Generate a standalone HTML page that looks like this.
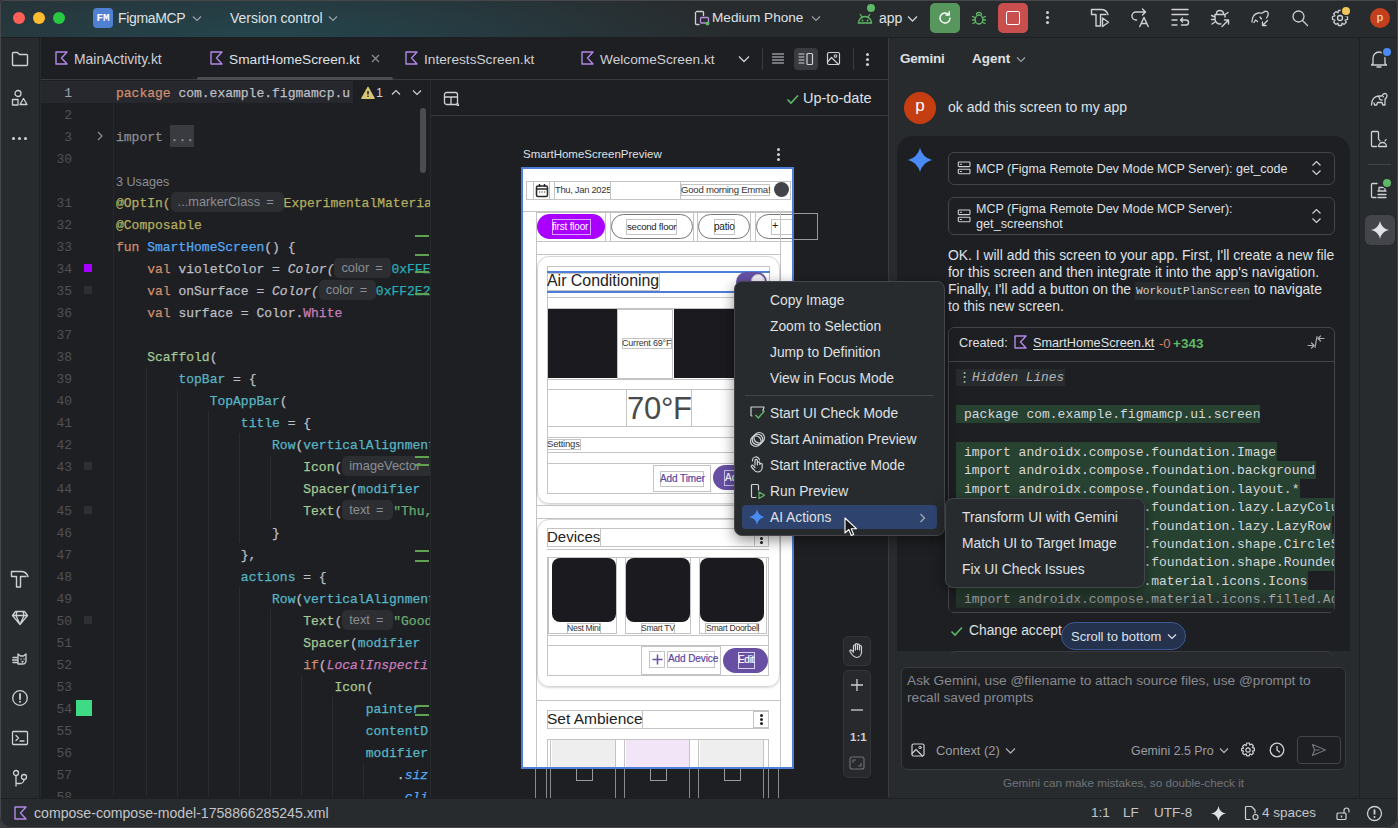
<!DOCTYPE html>
<html><head><meta charset="utf-8">
<style>
*{box-sizing:border-box;margin:0;padding:0}
html,body{width:1398px;height:828px;overflow:hidden;background:#3c3e42}
body{font-family:"Liberation Sans",sans-serif;color:#dfe1e5;font-size:13px;position:relative}
.a{position:absolute}
.win{position:absolute;left:0;top:0;width:1398px;height:828px;border-radius:4px 4px 10px 10px;overflow:hidden;background:#282b2d}
.mono{font-family:"Liberation Mono",monospace}
svg{position:absolute;overflow:visible}
.t{position:absolute;white-space:pre;line-height:1}
.ic{fill:none;stroke:#ced0d6;stroke-width:1.3;stroke-linecap:round;stroke-linejoin:round}
/* editor */
.ln{position:absolute;left:40px;width:32px;height:22px;text-align:right;font:13px "Liberation Mono",monospace;line-height:26px;color:#4e5157}
.ln.cur{color:#a1a3ab}
.cl{position:absolute;left:116px;height:22px;white-space:pre;font:13px "Liberation Mono",monospace;line-height:26px;color:#bcbec4;-webkit-text-stroke:.25px}
.kw{color:#cf8e6d}.an{color:#b3ae60}.fn{color:#56a8f5}.it{font-style:italic}.num{color:#2aacb8}.pu{color:#c77dbb}
.cm{color:#a4c896}.na{color:#58b5c5}.str{color:#6aab73}.pit{color:#c77dbb;font-style:italic}.bit{color:#56a8f5;font-style:italic}
.im{color:#8a8d93}.fold{color:#8a8d93}
.usage{font-family:"Liberation Sans",sans-serif;font-size:12.6px;color:#8c8e94;-webkit-text-stroke:0}
.hint{display:inline-block;height:20px;vertical-align:top;margin-top:1px;background:#2c2e32;border-radius:5px;font:12.8px "Liberation Sans",sans-serif;line-height:20px;color:#8b8e94;white-space:pre;overflow:hidden;word-spacing:2.5px;-webkit-text-stroke:0}
.hint span{padding-left:7px}
.guide{position:absolute;width:1px;background:#2a2c30}
/* menu */
.mi{position:absolute;left:770px;font-size:13.8px;color:#dfe1e5;white-space:pre;line-height:1}
.smi{position:absolute;left:962px;font-size:13.8px;color:#dfe1e5;white-space:pre;line-height:1}
</style></head><body>
<div class="win">
<!-- TITLE BAR -->
<div class="a" style="left:0;top:0;width:1398px;height:38px;background:radial-gradient(ellipse 480px 80px at 260px 38px,#24454d 0%,#263b41 45%,#282b2d 100%)"></div>
<div class="a" style="left:0;top:37px;width:1398px;height:1px;background:#1e1f22"></div>
<div class="a" style="left:13px;top:12px;width:12px;height:12px;border-radius:50%;background:#fe5f57"></div>
<div class="a" style="left:33px;top:12px;width:12px;height:12px;border-radius:50%;background:#febc2e"></div>
<div class="a" style="left:53px;top:12px;width:12px;height:12px;border-radius:50%;background:#28c840"></div>
<div class="a" style="left:93px;top:8px;width:20px;height:20px;border-radius:4px;background:#4f80d1;color:#fff;font:bold 11px 'Liberation Mono',monospace;line-height:20px;text-align:center">FM</div>
<div class="t" style="left:118px;top:11px;font-size:14px;letter-spacing:-.35px;color:#dfe1e5">FigmaMCP</div>
<svg style="left:192px;top:15px" width="10" height="8"><path d="M1 1.5l4 4 4-4" fill="none" stroke="#9da0a8" stroke-width="1.2"/></svg>
<div class="t" style="left:230px;top:11px;font-size:14px;color:#dfe1e5">Version control</div>
<svg style="left:328px;top:15px" width="10" height="8"><path d="M1 1.5l4 4 4-4" fill="none" stroke="#9da0a8" stroke-width="1.2"/></svg>
<!-- device -->
<svg style="left:694px;top:10px" width="16" height="16"><path class="ic" d="M2.5 1.5h6a1 1 0 0 1 1 1v3M5 14.5H2.5a1 1 0 0 1-1-1v-11" stroke="#ced0d6"/><rect x="6.5" y="7.5" width="8" height="5.5" rx="1" class="ic" style="stroke:#b98ee0"/><circle cx="13.5" cy="13.5" r="2" fill="#5fb865"/></svg>
<div class="t" style="left:712px;top:11px;font-size:13.6px;color:#dfe1e5">Medium Phone</div>
<svg style="left:811px;top:15px" width="10" height="8"><path d="M1 1.5l4 4 4-4" fill="none" stroke="#9da0a8" stroke-width="1.2"/></svg>
<!-- android -->
<svg style="left:857px;top:11px" width="16" height="14"><path d="M1.5 12a6.5 6.5 0 0 1 13 0z" fill="none" stroke="#5fb865" stroke-width="1.4"/><path d="M3 3l2 3M13 3l-2 3" stroke="#5fb865" stroke-width="1.3"/><circle cx="5.5" cy="9.5" r=".9" fill="#5fb865"/><circle cx="10.5" cy="9.5" r=".9" fill="#5fb865"/></svg>
<div class="a" style="left:867px;top:4px;width:8px;height:8px;border-radius:50%;background:#5fb865;box-shadow:0 0 0 1.5px #282b2d"></div>
<div class="t" style="left:879px;top:11px;font-size:14px;color:#dfe1e5">app</div>
<svg style="left:907px;top:15px" width="11" height="8"><path d="M1 1.5l4.5 4.5 4.5-4.5" fill="none" stroke="#ced0d6" stroke-width="1.3"/></svg>
<!-- run buttons -->
<div class="a" style="left:930px;top:3px;width:30px;height:30px;border-radius:5px;background:#57965c"></div>
<svg style="left:937px;top:10px" width="16" height="16"><path d="M13 8a5 5 0 1 1-1.6-3.7" fill="none" stroke="#fff" stroke-width="1.4" stroke-linecap="round"/><path d="M12.2 1.8v3.2H9" fill="none" stroke="#fff" stroke-width="1.4" stroke-linecap="round" stroke-linejoin="round"/></svg>
<svg style="left:971px;top:10px" width="16" height="16"><ellipse cx="8" cy="9.5" rx="3.8" ry="4.5" fill="none" stroke="#5fb865" stroke-width="1.3"/><path d="M5.5 4.5a2.5 2 0 0 1 5 0M1.5 6.5l2.5 1.2M14.5 6.5L12 7.7M1.5 10h2.7M14.5 10h-2.7M2 13.5l2.3-1.2M14 13.5l-2.3-1.2" fill="none" stroke="#5fb865" stroke-width="1.3" stroke-linecap="round"/></svg>
<div class="a" style="left:998px;top:3px;width:30px;height:30px;border-radius:5px;background:#c94f4f"></div>
<div class="a" style="left:1006px;top:11px;width:14px;height:14px;border-radius:2px;border:1.6px solid #fff"></div>
<div class="a" style="left:1046px;top:11px;width:3px;height:3px;border-radius:50%;background:#ced0d6;box-shadow:0 5px 0 #ced0d6,0 10px 0 #ced0d6"></div>
<!-- right title icons -->
<svg style="left:1089px;top:6px" width="22" height="24"><path class="ic" d="M2.5 3.5H12c3.5 0 6 2 7 5M2.5 3.5v5H7M11.5 8.5H17M7 8.5v11.5h4.5V8.5" style="stroke-width:1.4"/><path class="ic" d="M13.5 12v8.5l6-4.25z" style="stroke-width:1.4"/></svg>
<svg style="left:1129px;top:6px" width="22" height="24"><path class="ic" d="M7.5 14H7a4 4 0 0 1 0-8h9M13.5 3l3 3-3 3M10.8 20.5l4.2-9 4.2 9M12.2 17.5h5.6" style="stroke-width:1.4"/></svg>
<svg style="left:1169px;top:6px" width="22" height="24"><path class="ic" d="M3 3.5h16M3 8.5h16M3 14h5M3 19h5M13.5 12l-2 2 2 2M11.5 14h5.5a2.5 2.5 0 0 1 0 5h-4.5" style="stroke-width:1.4"/></svg>
<svg style="left:1209px;top:6px" width="22" height="24"><path class="ic" d="M7.5 7.5a3.5 3 0 0 1 7 0M6 8.5h10v2.5M6 8.5v4.5a5 5 0 0 0 6 4.9M2.5 9.5l3.5 1.5M2.5 13.5h3.5M3 18l3-2M19 6.5l-3 2M13 20.5l6.5-6.5M15.5 14h4v4" style="stroke-width:1.4"/></svg>
<svg style="left:1250px;top:8px" width="20" height="20"><path class="ic" d="M2 14c0-4 2-8 6-9 2-.5 3.5.5 4.5 0 1.3-.8 2.5-2.5 4.5-1.5 1.5 1 1.2 3.5.5 5l-1 1.5M4 14.5l1.5-2.5 2 1.5M10 9l1.5 2M17.5 12.5l-5 5M12.5 17.5h3.5M12.5 17.5v-3.5"/></svg>
<svg style="left:1291px;top:9px" width="18" height="18"><circle cx="7.5" cy="7.5" r="5.5" class="ic"/><path class="ic" d="M11.5 11.5l5 5"/></svg>
<svg style="left:1331px;top:9px" width="18" height="18"><path class="ic" d="M7.5 1.5h3l.6 2.3 2-1.2 2.2 2.1-1.2 2.1 2.4.7v3l-2.4.7 1.2 2.1-2.2 2.1-2-1.2-.6 2.3h-3l-.6-2.3-2 1.2-2.2-2.1 1.2-2.1-2.4-.7v-3l2.4-.7-1.2-2.1 2.2-2.1 2 1.2z"/><circle cx="9" cy="9" r="2.5" class="ic"/></svg>
<div class="a" style="left:1342px;top:7px;width:8px;height:8px;border-radius:50%;background:#f2c55c;box-shadow:0 0 0 1.5px #282b2d"></div>
<div class="a" style="left:1370px;top:8px;width:20px;height:20px;border-radius:50%;background:#c4401c;color:#f0e6e6;font:11.5px 'Liberation Sans',sans-serif;line-height:19px;text-align:center">p</div>
<!-- LEFT STRIP -->
<div class="a" style="left:0;top:38px;width:40px;height:760px;background:#282b2d;border-right:1px solid #1e1f22"></div>
<svg style="left:11px;top:50px" width="18" height="18"><path class="ic" d="M1.5 3.5a1 1 0 0 1 1-1h4l2 2h7a1 1 0 0 1 1 1v9a1 1 0 0 1-1 1h-13a1 1 0 0 1-1-1z" style="stroke-width:1.4"/><path class="ic" d="M1.5 7h15" style="stroke-width:1.2;opacity:0"/></svg>
<svg style="left:11px;top:89px" width="18" height="18"><circle cx="7" cy="4.5" r="3" class="ic"/><rect x="1.5" y="10.5" width="5.5" height="5.5" class="ic"/><path class="ic" d="M12.5 9.5l3.5 6h-7z"/></svg>
<div class="a" style="left:12px;top:137px;width:3px;height:3px;border-radius:50%;background:#ced0d6;box-shadow:6px 0 0 #ced0d6,12px 0 0 #ced0d6"></div>
<svg style="left:10px;top:569px" width="20" height="20"><path class="ic" d="M1.5 2.5H11c3.5 0 6 2 7 5M1.5 2.5v5h5M10.5 7.5H16M6.5 7.5v10.5h4V7.5" style="stroke-width:1.4"/></svg>
<svg style="left:11px;top:609px" width="18" height="18"><path class="ic" d="M4.5 2.5h9l3 4-7.5 9-7.5-9zM1.5 6.5h15M6 2.5l-1 4 4 9 4-9-1-4"/></svg>
<svg style="left:11px;top:649px" width="18" height="18"><path class="ic" d="M7 5l2.5 2h3L15 5v6.5c0 2-1.5 3.5-3.5 3.5H7zM2 8.5h4M1.5 11h4.5M2 13.5h4M10 10h.1M13 10h.1M11 12.5l.5.5.5-.5"/></svg>
<svg style="left:11px;top:689px" width="18" height="18"><circle cx="9" cy="9" r="7.3" class="ic"/><path class="ic" d="M9 5v5" style="stroke-width:1.8"/><circle cx="9" cy="12.8" r="1" fill="#ced0d6"/></svg>
<svg style="left:11px;top:729px" width="18" height="18"><rect x="1.5" y="2.5" width="15" height="13" rx="1" class="ic"/><path class="ic" d="M5 6.5l2.5 2.5L5 11.5M9 12h4"/></svg>
<svg style="left:11px;top:769px" width="18" height="18"><circle cx="5" cy="4" r="2.5" class="ic"/><circle cx="13" cy="8" r="2.5" class="ic"/><path class="ic" d="M5 6.5V17M13 10.5a4 4 0 0 1-4 4H5"/></svg>
<!-- EDITOR AREA BG -->
<div class="a" style="left:41px;top:38px;width:847px;height:760px;background:#1e1f22"></div>
<!-- tabs -->
<div class="a" style="left:41px;top:79px;width:847px;height:1px;background:#393b40"></div>
<svg style="left:55px;top:51px" width="14" height="14"><path d="M1 1h11L6.5 7 12 13H1z" fill="none" stroke="#b188e8" stroke-width="1.4" stroke-linejoin="round"/></svg>
<div class="t" style="left:74px;top:53px;font-size:13.9px;color:#ced0d6">MainActivity.kt</div>
<svg style="left:210px;top:51px" width="14" height="14"><path d="M1 1h11L6.5 7 12 13H1z" fill="none" stroke="#b188e8" stroke-width="1.4" stroke-linejoin="round"/></svg>
<div class="t" style="left:229px;top:53px;font-size:13.7px;color:#dfe1e5">SmartHomeScreen.kt</div>
<svg style="left:371px;top:54px" width="9" height="9"><path d="M1 1l7 7M8 1L1 8" stroke="#8c8f94" stroke-width="1.2"/></svg>
<div class="a" style="left:197px;top:77px;width:196px;height:3px;border-radius:2px;background:#4b4d52"></div>
<svg style="left:405px;top:51px" width="14" height="14"><path d="M1 1h11L6.5 7 12 13H1z" fill="none" stroke="#b188e8" stroke-width="1.4" stroke-linejoin="round"/></svg>
<div class="t" style="left:424px;top:53px;font-size:13.7px;color:#ced0d6">InterestsScreen.kt</div>
<svg style="left:581px;top:51px" width="14" height="14"><path d="M1 1h11L6.5 7 12 13H1z" fill="none" stroke="#b188e8" stroke-width="1.4" stroke-linejoin="round"/></svg>
<div class="t" style="left:600px;top:53px;font-size:13.7px;color:#ced0d6">WelcomeScreen.kt</div>
<svg style="left:738px;top:55px" width="12" height="8"><path d="M1 1.5l5 5 5-5" fill="none" stroke="#ced0d6" stroke-width="1.3"/></svg>
<div class="a" style="left:762px;top:48px;width:1px;height:22px;background:#393b40"></div>
<svg style="left:771px;top:52px" width="14" height="14"><path class="ic" d="M1.5 2h11M1.5 5h11M1.5 8h11M1.5 11h11" style="stroke-width:1.2"/></svg>
<div class="a" style="left:794px;top:48px;width:24px;height:22px;border-radius:4px;background:#393b40"></div>
<svg style="left:798px;top:52px" width="16" height="14"><path class="ic" d="M1 2h5M1 5h5M1 8h5M1 11h5" style="stroke-width:1.2"/><rect x="9" y="1.5" width="5.5" height="11" rx="1" class="ic" style="stroke-width:1.2"/></svg>
<svg style="left:826px;top:51px" width="15" height="15"><rect x="1.5" y="1.5" width="12" height="12" rx="1.5" class="ic" style="stroke-width:1.2"/><circle cx="9.5" cy="5" r="1.3" class="ic" style="stroke-width:1.1"/><path class="ic" d="M1.5 11l4-4.5 7 7" style="stroke-width:1.2"/></svg>
<div class="a" style="left:853px;top:48px;width:1px;height:22px;background:#393b40"></div>
<div class="a" style="left:866px;top:53px;width:3px;height:3px;border-radius:50%;background:#ced0d6;box-shadow:0 5px 0 #ced0d6,0 10px 0 #ced0d6"></div>
<!-- current line -->
<div class="a" style="left:41px;top:81px;width:389px;height:22px;background:#26282e"></div>
<!-- gutter sep -->
<div class="a" style="left:113px;top:81px;width:1px;height:716px;background:#26282c"></div>
<div class="a" style="left:170px;top:125px;width:24px;height:22px;background:#393b40"></div>
<div class="ln cur" style="top:81px">1</div>
<div class="cl" style="top:81px"><span class="kw">package</span><span class="d"> com.example.figmamcp.u</span></div>
<div class="ln" style="top:103px">2</div>
<div class="ln" style="top:125px">3</div>
<div class="cl" style="top:125px"><span class="im">import </span><span class="fold">...</span></div>
<div class="ln" style="top:147px">30</div>
<div class="cl" style="top:169px"><span class="usage">3 Usages</span></div>
<div class="ln" style="top:191px">31</div>
<div class="cl" style="top:191px"><span class="an">@OptIn(</span><span class="hint" style="width:113px"><span>...markerClass =</span></span><span class="an">ExperimentalMateria</span></div>
<div class="ln" style="top:213px">32</div>
<div class="cl" style="top:213px"><span class="an">@Composable</span></div>
<div class="ln" style="top:235px">33</div>
<div class="cl" style="top:235px"><span class="kw">fun </span><span class="fn">SmartHomeScreen</span><span class="d">() {</span></div>
<div class="ln" style="top:257px">34</div>
<div class="cl" style="top:257px"><span class="d">    </span><span class="kw">val</span><span class="d"> violetColor = </span><span class="it">Color(</span><span class="hint" style="width:57px"><span>color =</span></span><span class="num">0xFFEB</span></div>
<div class="ln" style="top:279px">35</div>
<div class="cl" style="top:279px"><span class="d">    </span><span class="kw">val</span><span class="d"> onSurface = </span><span class="it">Color(</span><span class="hint" style="width:57px"><span>color =</span></span><span class="num">0xFF2E2</span></div>
<div class="ln" style="top:301px">36</div>
<div class="cl" style="top:301px"><span class="d">    </span><span class="kw">val</span><span class="d"> surface = Color.</span><span class="pu">White</span></div>
<div class="ln" style="top:323px">37</div>
<div class="ln" style="top:345px">38</div>
<div class="cl" style="top:345px"><span class="d">    </span><span class="cm">Scaffold</span><span class="d">(</span></div>
<div class="ln" style="top:367px">39</div>
<div class="cl" style="top:367px"><span class="d">        </span><span class="na">topBar</span><span class="d"> = {</span></div>
<div class="ln" style="top:389px">40</div>
<div class="cl" style="top:389px"><span class="d">            </span><span class="na">TopAppBar</span><span class="d">(</span></div>
<div class="ln" style="top:411px">41</div>
<div class="cl" style="top:411px"><span class="d">                </span><span class="na">title</span><span class="d"> = {</span></div>
<div class="ln" style="top:433px">42</div>
<div class="cl" style="top:433px"><span class="d">                    </span><span class="na">Row</span><span class="d">(</span><span class="na">verticalAlignment</span></div>
<div class="ln" style="top:455px">43</div>
<div class="cl" style="top:455px"><span class="d">                        </span><span class="cm">Icon</span><span class="d">(</span><span class="hint" style="width:90px"><span>imageVector</span></span></div>
<div class="ln" style="top:477px">44</div>
<div class="cl" style="top:477px"><span class="d">                        </span><span class="cm">Spacer</span><span class="d">(</span><span class="na">modifier</span></div>
<div class="ln" style="top:499px">45</div>
<div class="cl" style="top:499px"><span class="d">                        </span><span class="cm">Text</span><span class="d">(</span><span class="hint" style="width:51px"><span>text =</span></span><span class="str">"Thu,</span></div>
<div class="ln" style="top:521px">46</div>
<div class="cl" style="top:521px"><span class="d">                    }</span></div>
<div class="ln" style="top:543px">47</div>
<div class="cl" style="top:543px"><span class="d">                },</span></div>
<div class="ln" style="top:565px">48</div>
<div class="cl" style="top:565px"><span class="d">                </span><span class="na">actions</span><span class="d"> = {</span></div>
<div class="ln" style="top:587px">49</div>
<div class="cl" style="top:587px"><span class="d">                    </span><span class="na">Row</span><span class="d">(</span><span class="na">verticalAlignment</span></div>
<div class="ln" style="top:609px">50</div>
<div class="cl" style="top:609px"><span class="d">                        </span><span class="cm">Text</span><span class="d">(</span><span class="hint" style="width:51px"><span>text =</span></span><span class="str">"Good</span></div>
<div class="ln" style="top:631px">51</div>
<div class="cl" style="top:631px"><span class="d">                        </span><span class="cm">Spacer</span><span class="d">(</span><span class="na">modifier</span></div>
<div class="ln" style="top:653px">52</div>
<div class="cl" style="top:653px"><span class="d">                        </span><span class="kw">if</span><span class="d">(</span><span class="pit">LocalInspecti</span></div>
<div class="ln" style="top:675px">53</div>
<div class="cl" style="top:675px"><span class="d">                            </span><span class="cm">Icon</span><span class="d">(</span></div>
<div class="ln" style="top:697px">54</div>
<div class="cl" style="top:697px"><span class="d">                                </span><span class="na">painter</span></div>
<div class="ln" style="top:719px">55</div>
<div class="cl" style="top:719px"><span class="d">                                </span><span class="na">contentD</span></div>
<div class="ln" style="top:741px">56</div>
<div class="cl" style="top:741px"><span class="d">                                </span><span class="na">modifier</span></div>
<div class="ln" style="top:763px">57</div>
<div class="cl" style="top:763px"><span class="d">                                    .</span><span class="bit">siz</span></div>
<div class="ln" style="top:785px">58</div>
<div class="cl" style="top:785px"><span class="d">                                     </span><span class="bit">cli</span></div><!-- guides -->
<div class="guide" style="left:146px;top:367px;height:430px"></div>
<div class="guide" style="left:177px;top:389px;height:408px"></div>
<div class="guide" style="left:208px;top:411px;height:386px"></div>
<div class="guide" style="left:239px;top:433px;height:110px"></div>
<div class="guide" style="left:270px;top:455px;height:66px"></div>
<div class="guide" style="left:239px;top:587px;height:210px"></div>
<div class="guide" style="left:270px;top:609px;height:188px"></div>
<div class="guide" style="left:301px;top:675px;height:122px"></div>
<div class="guide" style="left:332px;top:697px;height:100px"></div>
<div class="guide" style="left:363px;top:763px;height:34px"></div>
<!-- gutter icons -->
<svg style="left:96px;top:131px" width="8" height="10"><path d="M2 1l4 4-4 4" fill="none" stroke="#8c8f94" stroke-width="1.2"/></svg>
<div class="a" style="left:84px;top:264px;width:8px;height:8px;background:#a600ff"></div>
<div class="a" style="left:84px;top:286px;width:8px;height:8px;background:#2e2e32"></div>
<div class="a" style="left:84px;top:462px;width:8px;height:8px;background:#2e3032"></div>
<div class="a" style="left:84px;top:506px;width:8px;height:8px;background:#2e3032"></div>
<div class="a" style="left:84px;top:616px;width:8px;height:8px;background:#2e3032"></div>
<div class="a" style="left:76px;top:700px;width:16px;height:16px;background:#3ddc84"></div>
<!-- editor right overlay: clip code -->
<div class="a" style="left:430px;top:80px;width:458px;height:718px;background:#1e1f22"></div>
<div class="a" style="left:430px;top:80px;width:1px;height:717px;background:#282b2d"></div>
<!-- warning box -->
<div class="a" style="left:353px;top:81px;width:77px;height:22px;background:#1e1f22"></div>
<svg style="left:361px;top:86px" width="14" height="13"><path d="M7 1.2L13.2 12.3H.8z" fill="#d8c573" stroke="#d8c573" stroke-width="1.2" stroke-linejoin="round"/><path d="M7 5v3.5" stroke="#1e1f22" stroke-width="1.5"/><circle cx="7" cy="10.3" r=".8" fill="#1e1f22"/></svg>
<div class="t" style="left:376px;top:87px;font-size:12.5px;color:#ced0d6">1</div>
<svg style="left:391px;top:89px" width="10" height="7"><path d="M1 5.5l4-4 4 4" fill="none" stroke="#ced0d6" stroke-width="1.2"/></svg>
<svg style="left:412px;top:89px" width="10" height="7"><path d="M1 1.5l4 4 4-4" fill="none" stroke="#ced0d6" stroke-width="1.2"/></svg>
<!-- scrollbar -->
<div class="a" style="left:420px;top:108px;width:6px;height:65px;border-radius:3px;background:#4a4c50"></div>
<!-- green markers -->
<div class="a" style="left:415px;top:235px;width:14px;height:2px;background:#5fa34f"></div>
<div class="a" style="left:415px;top:254px;width:14px;height:2px;background:#5fa34f"></div>
<div class="a" style="left:415px;top:271px;width:14px;height:2px;background:#5fa34f"></div>
<div class="a" style="left:415px;top:293px;width:14px;height:2px;background:#5fa34f"></div>
<div class="a" style="left:415px;top:456px;width:14px;height:2px;background:#5fa34f"></div>
<div class="a" style="left:415px;top:464px;width:14px;height:2px;background:#5fa34f"></div>
<div class="a" style="left:415px;top:550px;width:14px;height:2px;background:#5fa34f"></div>
<div class="a" style="left:415px;top:560px;width:14px;height:2px;background:#5fa34f"></div>
<div class="a" style="left:415px;top:705px;width:14px;height:2px;background:#5fa34f"></div>
<div class="a" style="left:415px;top:714px;width:14px;height:2px;background:#5fa34f"></div>
<!-- PREVIEW -->
<div class="a" style="left:431px;top:80px;width:457px;height:718px;background:#1e1f22"></div>
<div class="a" style="left:431px;top:115px;width:457px;height:1px;background:#393b40"></div>
<svg style="left:443px;top:91px" width="17" height="16"><rect x="1.5" y="1.5" width="13" height="12" rx="2" class="ic" style="stroke-width:1.3"/><path class="ic" d="M1.5 6h13M8 6v7.5" style="stroke-width:1.3"/><path d="M13 15l3-3v3z" fill="#ced0d6"/></svg>
<svg style="left:786px;top:93px" width="13" height="12"><path d="M1.5 6.5l3.5 3.5L12 2.5" fill="none" stroke="#5fb865" stroke-width="1.6"/></svg>
<div class="t" style="left:803px;top:91px;font-size:14.5px;color:#dfe1e5">Up-to-date</div>
<div class="t" style="left:523px;top:149px;font-size:11.5px;color:#dfe1e5">SmartHomeScreenPreview</div>
<div class="a" style="left:777px;top:148px;width:3px;height:3px;border-radius:50%;background:#ced0d6;box-shadow:0 5px 0 #ced0d6,0 10px 0 #ced0d6"></div>
<!-- lines below phone -->
<div class="a" style="left:535px;top:767px;width:1px;height:31px;background:#8a8a8a"></div>
<div class="a" style="left:546px;top:767px;width:1px;height:31px;background:#8a8a8a"></div>
<div class="a" style="left:550px;top:767px;width:1px;height:31px;background:#8a8a8a"></div>
<div class="a" style="left:615px;top:767px;width:1px;height:31px;background:#8a8a8a"></div>
<div class="a" style="left:624px;top:767px;width:1px;height:31px;background:#8a8a8a"></div>
<div class="a" style="left:689px;top:767px;width:1px;height:31px;background:#8a8a8a"></div>
<div class="a" style="left:698px;top:767px;width:1px;height:31px;background:#8a8a8a"></div>
<div class="a" style="left:763px;top:767px;width:1px;height:31px;background:#8a8a8a"></div>
<div class="a" style="left:768px;top:767px;width:1px;height:31px;background:#8a8a8a"></div>
<div class="a" style="left:778px;top:767px;width:1px;height:31px;background:#8a8a8a"></div>
<div class="a" style="left:576px;top:764px;width:17px;height:17px;border:1px solid #9a9a9a"></div>
<div class="a" style="left:650px;top:764px;width:17px;height:17px;border:1px solid #9a9a9a"></div>
<div class="a" style="left:724px;top:764px;width:17px;height:17px;border:1px solid #9a9a9a"></div>
<!-- outside chip bounds -->
<div class="a" style="left:770px;top:213px;width:48px;height:27px;border:1px solid #9a9a9a"></div>
<!-- PHONE -->
<div class="a" id="phone" style="left:521px;top:167px;width:273px;height:602px;background:#fff;border:2px solid #4f7ed8;overflow:hidden">
 <div style="position:relative;left:-523px;top:-169px;width:1398px;height:828px">
  <!-- top app bar -->
  <div class="a" style="left:526px;top:181px;width:265px;height:19px;border:1px solid #c4c4c4"></div>
  <div class="a" style="left:533px;top:181px;width:17px;height:19px;border:1px solid #c4c4c4"></div>
  <svg style="left:535px;top:183px" width="14" height="15"><rect x="1.5" y="3" width="11" height="10.5" rx="1.5" fill="none" stroke="#2b2b2b" stroke-width="1.6"/><path d="M1.5 6h11M4.5 1v3M9.5 1v3" stroke="#2b2b2b" stroke-width="1.5"/><path d="M4 9h1.2M6.5 9h1.2M9 9h1.2" stroke="#2b2b2b" stroke-width="1.1"/></svg>
  <div class="a" style="left:554px;top:181px;width:57px;height:19px;border:1px solid #c4c4c4"></div>
  <div class="a" style="left:555px;top:184px;width:55px;height:14px;overflow:hidden"><div class="t" style="left:0;top:1px;font-size:9.4px;color:#333;letter-spacing:-.3px">Thu, Jan 2025</div></div>
  <div class="a" style="left:610px;top:181px;width:71px;height:19px;border:1px solid #c4c4c4"></div>
  <div class="a" style="left:681px;top:184px;width:89px;height:12px;border:1px solid #c4c4c4"></div>
  <div class="t" style="left:681px;top:185px;font-size:9.6px;color:#333;letter-spacing:-.25px">Good morning Emma!</div>
  <div class="a" style="left:774px;top:182px;width:15px;height:15px;border-radius:50%;background:#434447"></div>
  <div class="a" style="left:523px;top:211px;width:271px;height:1px;background:#c4c4c4"></div>
  <!-- chips -->
  <div class="a" style="left:536px;top:212px;width:258px;height:30px;border:1px solid #c4c4c4"></div>
  <div class="a" style="left:536px;top:212px;width:70px;height:30px;border:1px solid #c4c4c4"></div>
  <div class="a" style="left:537px;top:214px;width:68px;height:25px;border-radius:13px;background:#aa00ff"></div>
  <div class="a" style="left:552px;top:219px;width:39px;height:16px;border:1px solid #d9a6ff"></div>
  <div class="t" style="left:552px;top:222px;font-size:10px;color:#fff;letter-spacing:-.2px">first floor</div>
  <div class="a" style="left:610px;top:212px;width:84px;height:30px;border:1px solid #c4c4c4"></div>
  <div class="a" style="left:611px;top:214px;width:82px;height:25px;border-radius:13px;border:1px solid #777"></div>
  <div class="a" style="left:626px;top:219px;width:51px;height:16px;border:1px solid #c4c4c4"></div>
  <div class="t" style="left:627px;top:222px;font-size:9.6px;color:#222;letter-spacing:-.25px">second floor</div>
  <div class="a" style="left:697px;top:212px;width:54px;height:30px;border:1px solid #c4c4c4"></div>
  <div class="a" style="left:698px;top:214px;width:52px;height:25px;border-radius:13px;border:1px solid #777"></div>
  <div class="a" style="left:714px;top:219px;width:21px;height:16px;border:1px solid #c4c4c4"></div>
  <div class="t" style="left:714px;top:222px;font-size:10px;color:#222;letter-spacing:-.2px">patio</div>
  <div class="a" style="left:755px;top:212px;width:40px;height:30px;border:1px solid #c4c4c4"></div>
  <div class="a" style="left:756px;top:214px;width:50px;height:25px;border-radius:13px;border:1px solid #777"></div>
  <div class="a" style="left:771px;top:219px;width:32px;height:16px;border:1px solid #c4c4c4"></div>
  <div class="t" style="left:772px;top:220px;font-size:11px;color:#222">+</div>
  <div class="a" style="left:780px;top:212px;width:1px;height:560px;background:#c4c4c4"></div>
  <div class="a" style="left:536px;top:242px;width:1px;height:530px;background:#c4c4c4"></div>
  <div class="a" style="left:536px;top:254px;width:244px;height:1px;background:#c4c4c4"></div>
  <!-- AC card -->
  <div class="a" style="left:537px;top:256px;width:243px;height:248px;border-radius:12px;border:1px solid #d6d6d6;box-shadow:0 1px 2px rgba(0,0,0,.15)"></div>
  <div class="a" style="left:547px;top:266px;width:223px;height:228px;border:1px solid #c4c4c4"></div>
  <div class="a" style="left:547px;top:271px;width:223px;height:22px;border-top:2px solid #4f7ed8;border-bottom:2px solid #4f7ed8"></div>
  <div class="a" style="left:547px;top:273px;width:113px;height:18px;border:1px solid #c4c4c4"></div>
  <div class="t" style="left:547px;top:273px;font-size:15.9px;color:#222">Air Conditioning</div>
  <div class="a" style="left:736px;top:272px;width:31px;height:20px;border-radius:10px;background:#6750a4"></div><div class="a" style="left:751px;top:274px;width:14px;height:14px;border-radius:7px;background:#f4f0fa;border:1px solid #c4c4c4"></div>
  <div class="a" style="left:547px;top:297px;width:223px;height:1px;background:#c4c4c4"></div>
  <div class="a" style="left:547px;top:308px;width:223px;height:72px;border:1px solid #c4c4c4"></div>
  <div class="a" style="left:548px;top:309px;width:69px;height:69px;background:#1b1b1f"></div>
  <div class="a" style="left:617px;top:309px;width:56px;height:70px;border:1px solid #c4c4c4"></div>
  <div class="a" style="left:622px;top:338px;width:50px;height:11px;border:1px solid #c4c4c4"></div>
  <div class="t" style="left:622px;top:339px;font-size:9px;color:#333;letter-spacing:-.2px">Current 69°F</div>
  <div class="a" style="left:674px;top:309px;width:70px;height:69px;background:#1b1b1f"></div>
  <div class="a" style="left:547px;top:389px;width:223px;height:38px;border:1px solid #c4c4c4"></div>
  <div class="a" style="left:626px;top:389px;width:66px;height:38px;border:1px solid #c4c4c4"></div>
  <div class="t" style="left:627px;top:393px;font-size:31px;color:#4a4a4a;letter-spacing:-.3px;font-weight:300">70°F</div>
  <div class="a" style="left:547px;top:437px;width:223px;height:16px;border:1px solid #c4c4c4"></div>
  <div class="a" style="left:547px;top:439px;width:34px;height:11px;border:1px solid #c4c4c4"></div>
  <div class="t" style="left:547px;top:439px;font-size:9.5px;color:#333;letter-spacing:-.2px">Settings</div>
  <div class="a" style="left:547px;top:463px;width:223px;height:31px;border:1px solid #c4c4c4"></div>
  <div class="a" style="left:653px;top:465px;width:58px;height:27px;border:1px solid #c4c4c4"></div>
  <div class="a" style="left:660px;top:471px;width:44px;height:16px;border:1px solid #c4c4c4"></div>
  <div class="t" style="left:660px;top:474px;font-size:10px;color:#5b46a0;letter-spacing:-.1px;-webkit-text-stroke:.2px">Add Timer</div>
  <div class="a" style="left:713px;top:465px;width:50px;height:25px;border-radius:13px;background:#6750a4"></div>
  <div class="a" style="left:724px;top:470px;width:20px;height:16px;border:1px solid #c9bdf0"></div>
  <div class="t" style="left:725px;top:473px;font-size:10px;color:#fff;-webkit-text-stroke:.2px">Ad</div>
  <div class="a" style="left:536px;top:505px;width:244px;height:1px;background:#c4c4c4"></div>
  <div class="a" style="left:536px;top:518px;width:244px;height:1px;background:#c4c4c4"></div>
  <!-- Devices card -->
  <div class="a" style="left:537px;top:519px;width:243px;height:168px;border-radius:12px;border:1px solid #d6d6d6;box-shadow:0 1px 2px rgba(0,0,0,.15)"></div>
  <div class="a" style="left:547px;top:528px;width:222px;height:19px;border:1px solid #c4c4c4"></div>
  <div class="a" style="left:547px;top:528px;width:54px;height:19px;border:1px solid #c4c4c4"></div>
  <div class="t" style="left:547px;top:529px;font-size:15px;color:#222">Devices</div>
  <div class="a" style="left:754px;top:528px;width:15px;height:19px;border:1px solid #c4c4c4"></div>
  <div class="a" style="left:760px;top:533px;width:3px;height:3px;border-radius:50%;background:#222;box-shadow:0 4px 0 #222,0 8px 0 #222"></div>
  <div class="a" style="left:547px;top:549px;width:222px;height:1px;background:#c4c4c4"></div>
  <div class="a" style="left:547px;top:557px;width:222px;height:89px;border:1px solid #c4c4c4"></div>
  <div class="a" style="left:548px;top:557px;width:69px;height:77px;border:1px solid #c4c4c4"></div>
  <div class="a" style="left:552px;top:558px;width:64px;height:64px;border-radius:8px;background:#1b1b1f"></div>
  <div class="a" style="left:567px;top:623px;width:34px;height:11px;border:1px solid #c4c4c4"></div>
  <div class="t" style="left:567px;top:624px;font-size:8.6px;color:#333;letter-spacing:-.3px">Nest Mini</div>
  <div class="a" style="left:625px;top:557px;width:66px;height:77px;border:1px solid #c4c4c4"></div>
  <div class="a" style="left:626px;top:558px;width:64px;height:64px;border-radius:8px;background:#1b1b1f"></div>
  <div class="a" style="left:641px;top:623px;width:34px;height:11px;border:1px solid #c4c4c4"></div>
  <div class="t" style="left:641px;top:624px;font-size:8.6px;color:#333;letter-spacing:-.3px">Smart TV</div>
  <div class="a" style="left:699px;top:557px;width:68px;height:77px;border:1px solid #c4c4c4"></div>
  <div class="a" style="left:700px;top:558px;width:64px;height:64px;border-radius:8px;background:#1b1b1f"></div>
  <div class="a" style="left:705px;top:623px;width:54px;height:11px;border:1px solid #c4c4c4"></div>
  <div class="t" style="left:706px;top:624px;font-size:8.6px;color:#333;letter-spacing:-.3px">Smart Doorbell</div>
  <div class="a" style="left:547px;top:635px;width:222px;height:1px;background:#c4c4c4"></div>
  <div class="a" style="left:547px;top:645px;width:222px;height:31px;border:1px solid #c4c4c4"></div>
  <div class="a" style="left:641px;top:646px;width:80px;height:29px;border:1px solid #c4c4c4"></div>
  <div class="a" style="left:649px;top:651px;width:16px;height:17px;border:1px solid #c4c4c4"></div>
  <svg style="left:651px;top:653px" width="13" height="13"><path d="M6.5 1.5v10M1.5 6.5h10" stroke="#6750a4" stroke-width="1.5"/></svg>
  <div class="a" style="left:667px;top:651px;width:48px;height:17px;border:1px solid #c4c4c4"></div>
  <div class="t" style="left:668px;top:654px;font-size:10px;color:#5b46a0;letter-spacing:-.1px;-webkit-text-stroke:.2px">Add Device</div>
  <div class="a" style="left:723px;top:648px;width:45px;height:25px;border-radius:13px;background:#6750a4"></div>
  <div class="a" style="left:738px;top:652px;width:17px;height:17px;border:1px solid #d9cff5"></div>
  <div class="t" style="left:738px;top:655px;font-size:10px;color:#fff;letter-spacing:-.3px;-webkit-text-stroke:.2px">Edit</div>
  <div class="a" style="left:536px;top:700px;width:244px;height:1px;background:#c4c4c4"></div>
  <!-- Set Ambience -->
  <div class="a" style="left:547px;top:710px;width:222px;height:19px;border:1px solid #c4c4c4"></div>
  <div class="a" style="left:547px;top:710px;width:96px;height:19px;border:1px solid #c4c4c4"></div>
  <div class="t" style="left:547px;top:711px;font-size:15.5px;color:#222">Set Ambience</div>
  <div class="a" style="left:753px;top:711px;width:16px;height:17px;border:1px solid #c4c4c4"></div>
  <div class="a" style="left:760px;top:714px;width:3px;height:3px;border-radius:50%;background:#222;box-shadow:0 4px 0 #222,0 8px 0 #222"></div>
  <div class="a" style="left:547px;top:739px;width:222px;height:1px;background:#c4c4c4"></div>
  <div class="a" style="left:552px;top:740px;width:63px;height:30px;background:#eeeeee"></div>
  <div class="a" style="left:626px;top:740px;width:63px;height:30px;background:#f3e5f8"></div>
  <div class="a" style="left:700px;top:740px;width:63px;height:30px;background:#eeeeee"></div>
  <div class="a" style="left:547px;top:739px;width:1px;height:40px;background:#c4c4c4"></div>
  <div class="a" style="left:550px;top:739px;width:1px;height:40px;background:#c4c4c4"></div>
  <div class="a" style="left:615px;top:739px;width:1px;height:40px;background:#c4c4c4"></div>
  <div class="a" style="left:624px;top:739px;width:1px;height:40px;background:#c4c4c4"></div>
  <div class="a" style="left:689px;top:739px;width:1px;height:40px;background:#c4c4c4"></div>
  <div class="a" style="left:698px;top:739px;width:1px;height:40px;background:#c4c4c4"></div>
  <div class="a" style="left:763px;top:739px;width:1px;height:40px;background:#c4c4c4"></div>
  <div class="a" style="left:768px;top:739px;width:1px;height:40px;background:#c4c4c4"></div>
  <div class="a" style="left:578px;top:767px;width:12px;height:3px;background:#222"></div>
  <div class="a" style="left:726px;top:767px;width:12px;height:3px;background:#222"></div>
 </div>
</div>
<!-- zoom controls -->
<div class="a" style="left:843px;top:636px;width:28px;height:30px;border-radius:5px;background:#27292c;border:1px solid #333538"></div>
<svg style="left:849px;top:642px" width="16" height="17"><path class="ic" d="M4.5 9V4a1 1 0 0 1 2 0v4M6.5 7.5V2.5a1 1 0 0 1 2 0v5M8.5 7.5V3a1 1 0 0 1 2 0v5M10.5 8V4.5a1 1 0 0 1 2 0V10c0 3-2 5.5-5 5.5-2 0-3-1-4.5-3l-2-3a1 1 0 0 1 1.5-1.3l2 1.8" style="stroke-width:1.2"/></svg>
<div class="a" style="left:843px;top:670px;width:28px;height:108px;border-radius:5px;background:#27292c;border:1px solid #333538"></div>
<svg style="left:850px;top:678px" width="14" height="14"><path d="M7 1v12M1 7h12" stroke="#ced0d6" stroke-width="1.3"/></svg>
<svg style="left:850px;top:704px" width="14" height="14"><path d="M1 6h12" stroke="#ced0d6" stroke-width="1.3"/></svg>
<div class="t" style="left:850px;top:732px;font-size:11.5px;font-weight:bold;color:#ced0d6">1:1</div>
<svg style="left:849px;top:756px" width="16" height="14"><rect x="1" y="1" width="14" height="12" rx="2" fill="none" stroke="#6f737a" stroke-width="1.1"/><path d="M4 7V4h3M12 7v3H9" fill="none" stroke="#6f737a" stroke-width="1.1"/></svg>
<div class="a" style="left:888px;top:38px;width:1px;height:759px;background:#393b40"></div>
<!-- GEMINI PANEL -->
<div class="a" style="left:889px;top:38px;width:470px;height:760px;background:#282b2d"></div>
<div class="t" style="left:900px;top:52px;font-size:13.5px;letter-spacing:-.2px;font-weight:bold;color:#dfe1e5">Gemini</div>
<div class="t" style="left:972px;top:52px;font-size:13.5px;font-weight:bold;color:#dfe1e5">Agent</div>
<svg style="left:1016px;top:56px" width="10" height="7"><path d="M1 1.5l4 4 4-4" fill="none" stroke="#9da0a8" stroke-width="1.2"/></svg>
<div class="a" style="left:904px;top:92px;width:32px;height:32px;border-radius:50%;background:#c43e12;color:#fff;font:17px 'Liberation Sans',sans-serif;line-height:28px;text-align:center">p</div>
<div class="t" style="left:948px;top:100px;font-size:14px;color:#dfe1e5">ok add this screen to my app</div>
<!-- response card -->
<div class="a" style="left:897px;top:136px;width:453px;height:515px;border-radius:16px 16px 0 0;background:#1e1f22"></div>
<svg style="left:908px;top:148px" width="24" height="24"><path d="M12 24A17 17 0 0 0 0 12 17 17 0 0 0 12 0a17 17 0 0 0 12 12 17 17 0 0 0-12 12z" fill="#4a8af4"/></svg>
<div class="a" style="left:948px;top:152px;width:387px;height:33px;border:1px solid #43454a;border-radius:6px"></div>
<svg style="left:957px;top:161px" width="14" height="14"><rect x="1.3" y="1" width="11.7" height="4.6" rx=".8" class="ic" style="stroke-width:1.1"/><rect x="1.3" y="8.3" width="11.7" height="4.4" rx=".8" class="ic" style="stroke-width:1.1"/><path class="ic" d="M3.3 3.3h1.2M3.3 10.5h1.2" style="stroke-width:1"/></svg>
<div class="t" style="left:976px;top:163px;font-size:12.5px;color:#dfe1e5">MCP (Figma Remote Dev Mode MCP Server): get_code</div>
<svg style="left:1311px;top:160px" width="11" height="16"><path d="M1.5 5.5l4-4 4 4M1.5 10.5l4 4 4-4" fill="none" stroke="#ced0d6" stroke-width="1.2"/></svg>
<div class="a" style="left:948px;top:197px;width:387px;height:38px;border:1px solid #43454a;border-radius:6px"></div>
<svg style="left:957px;top:209px" width="14" height="14"><rect x="1.3" y="1" width="11.7" height="4.6" rx=".8" class="ic" style="stroke-width:1.1"/><rect x="1.3" y="8.3" width="11.7" height="4.4" rx=".8" class="ic" style="stroke-width:1.1"/><path class="ic" d="M3.3 3.3h1.2M3.3 10.5h1.2" style="stroke-width:1"/></svg>
<div class="t" style="left:976px;top:203px;font-size:12.5px;color:#dfe1e5">MCP (Figma Remote Dev Mode MCP Server):</div>
<div class="t" style="left:976px;top:218px;font-size:12.7px;color:#dfe1e5">get_screenshot</div>
<svg style="left:1311px;top:208px" width="11" height="16"><path d="M1.5 5.5l4-4 4 4M1.5 10.5l4 4 4-4" fill="none" stroke="#ced0d6" stroke-width="1.2"/></svg>
<div class="t" style="left:948px;top:249px;font-size:13.9px;color:#dfe1e5">OK. I will add this screen to your app. First, I'll create a new file</div>
<div class="t" style="left:948px;top:266px;font-size:13.9px;color:#dfe1e5">for this screen and then integrate it into the app's navigation.</div>
<div class="t" style="left:948px;top:283px;font-size:13.9px;color:#dfe1e5">Finally, I'll add a button on the <span style="font-family:'Liberation Mono',monospace;font-size:11.2px;background:#282b2d;color:#ced0d6;padding:3px 0 3px 1px">WorkoutPlanScreen</span> to navigate</div>
<div class="t" style="left:948px;top:300px;font-size:13.9px;color:#dfe1e5">to this new screen.</div>
<!-- code card -->
<div class="a" style="left:948px;top:327px;width:387px;height:286px;border:1px solid #43454a;border-radius:6px;background:#1e1f22;overflow:hidden">
 <div class="a" style="left:0;top:33px;width:387px;height:1px;background:#43454a"></div>
</div>
<div class="t" style="left:959px;top:337px;font-size:12.7px;color:#dfe1e5">Created:</div>
<svg style="left:1014px;top:335px" width="14" height="14"><path d="M1 1h11L6.5 7 12 13H1z" fill="none" stroke="#b188e8" stroke-width="1.4" stroke-linejoin="round"/></svg>
<div class="t" style="left:1033px;top:337px;font-size:12.7px;color:#dfe1e5;text-decoration:underline;text-underline-offset:2px">SmartHomeScreen.kt</div>
<div class="t" style="left:1159px;top:337px;font-size:13px;color:#d9826a">-0</div>
<div class="t" style="left:1173px;top:337px;font-size:13.5px;font-weight:bold;color:#5fb865">+343</div>
<svg style="left:1307px;top:334px" width="18" height="16"><path class="ic" d="M17 4.5h-6M13.5 2l-2.5 2.5 2.5 2.5M1 11.5h6M4.5 9l2.5 2.5-2.5 2.5M10 2.5L8 13.5" style="stroke-width:1.2;stroke:#a8abb1"/></svg>
<div id="codecard" class="a" style="left:949px;top:362px;width:385px;height:250px;overflow:hidden;font:13px 'Liberation Mono',monospace;color:#d5d7dc">
 <div class="a" style="left:7px;top:7px;width:109px;height:17px;background:#282b2d"></div>
 <div class="t" style="left:9px;top:8px;height:16px;line-height:16px;font-size:13px;color:#b4b7bd">⋮</div><div class="t" style="left:23px;top:8px;height:16px;line-height:16px;font-size:12.8px;color:#b4b7bd"><i>Hidden Lines</i></div>
 <div class="a" style="left:7px;top:43px;width:304px;height:18px;background:#284232"></div>
 <div class="t" style="left:15px;top:44px;height:18px;line-height:18px">package com.example.figmamcp.ui.screen</div>
 <div class="a" style="left:7px;top:80.4px;width:321.0px;height:18.6px;background:#284232"></div>
 <div class="t" style="left:15px;top:81.9px;height:18.4px;line-height:18.4px">import androidx.compose.foundation.Image</div>
 <div class="a" style="left:7px;top:98.8px;width:360.0px;height:18.6px;background:#284232"></div>
 <div class="t" style="left:15px;top:100.3px;height:18.4px;line-height:18.4px">import androidx.compose.foundation.background</div>
 <div class="a" style="left:7px;top:117.2px;width:344.4px;height:18.6px;background:#284232"></div>
 <div class="t" style="left:15px;top:118.7px;height:18.4px;line-height:18.4px">import androidx.compose.foundation.layout.*</div>
 <div class="a" style="left:7px;top:135.6px;width:385.0px;height:18.6px;background:#284232"></div>
 <div class="t" style="left:15px;top:137.1px;height:18.4px;line-height:18.4px">import androidx.compose.foundation.lazy.LazyColumn</div>
 <div class="a" style="left:7px;top:154.0px;width:375.6px;height:18.6px;background:#284232"></div>
 <div class="t" style="left:15px;top:155.5px;height:18.4px;line-height:18.4px">import androidx.compose.foundation.lazy.LazyRow</div>
 <div class="a" style="left:7px;top:172.4px;width:385.0px;height:18.6px;background:#284232"></div>
 <div class="t" style="left:15px;top:173.9px;height:18.4px;line-height:18.4px">import androidx.compose.foundation.shape.CircleShape</div>
 <div class="a" style="left:7px;top:190.8px;width:385.0px;height:18.6px;background:#284232"></div>
 <div class="t" style="left:15px;top:192.3px;height:18.4px;line-height:18.4px">import androidx.compose.foundation.shape.RoundedCornerShape</div>
 <div class="a" style="left:7px;top:209.2px;width:352.2px;height:18.6px;background:#284232"></div>
 <div class="t" style="left:15px;top:210.7px;height:18.4px;line-height:18.4px">import androidx.compose.material.icons.Icons</div>
 <div class="a" style="left:7px;top:227.6px;width:385.0px;height:18.6px;background:#284232"></div>
 <div class="t" style="left:15px;top:229.1px;height:18.4px;line-height:18.4px">import androidx.compose.material.icons.filled.Add</div>
 <div class="a" style="left:0;top:226px;width:385px;height:24px;background:linear-gradient(rgba(30,31,34,0),rgba(30,31,34,.7))"></div>
</div>
<svg style="left:950px;top:625px" width="13" height="12"><path d="M1.5 6.5l3.5 3.5L12 2.5" fill="none" stroke="#5fb865" stroke-width="1.6"/></svg>
<div class="t" style="left:969px;top:624px;font-size:13.8px;color:#dfe1e5">Change accept</div>
<div class="a" style="left:1061px;top:622px;width:125px;height:28px;border-radius:14px;background:#25324d;border:1.5px solid #3b5a96"></div>
<div class="t" style="left:1071px;top:630px;font-size:13px;color:#dfe1e5">Scroll to bottom</div>
<svg style="left:1167px;top:633px" width="10" height="7"><path d="M1 1.5l4 4 4-4" fill="none" stroke="#dfe1e5" stroke-width="1.2"/></svg>
<div class="a" style="left:949px;top:651px;width:385px;height:16px;border-top:1px solid #393b40;border-radius:8px 8px 0 0"></div>
<!-- input -->
<div class="a" style="left:901px;top:667px;width:445px;height:103px;border:1px solid #393b40;border-radius:6px;background:#1e1f22"></div>
<div class="t" style="left:907px;top:674px;font-size:13.7px;color:#868a91">Ask Gemini, use @filename to attach source files, use @prompt to</div>
<div class="t" style="left:907px;top:691px;font-size:13.7px;color:#868a91">recall saved prompts</div>
<svg style="left:911px;top:743px" width="14" height="14"><rect x="1" y="1" width="12" height="12" rx="1.5" class="ic" style="stroke-width:1.2"/><circle cx="9" cy="4.5" r="1.2" class="ic" style="stroke-width:1"/><path class="ic" d="M1 10.5l4-4 6.5 6.5" style="stroke-width:1.2"/></svg>
<div class="t" style="left:936px;top:745px;font-size:12.9px;color:#9a9da3">Context (2)</div>
<svg style="left:1005px;top:747px" width="11" height="8"><path d="M1 1.5l4.5 4.5 4.5-4.5" fill="none" stroke="#a8abb1" stroke-width="1.3"/></svg>
<div class="t" style="left:1131px;top:745px;font-size:12.4px;color:#9a9da3">Gemini 2.5 Pro</div>
<svg style="left:1219px;top:747px" width="10" height="8"><path d="M1 1.5l4 4 4-4" fill="none" stroke="#a8abb1" stroke-width="1.3"/></svg>
<svg style="left:1240px;top:742px" width="16" height="16"><path class="ic" d="M6.7 1h2.6l.5 2 1.8-1 1.8 1.8-1 1.8 2 .5v2.6l-2 .5 1 1.8-1.8 1.8-1.8-1-.5 2H6.7l-.5-2-1.8 1-1.8-1.8 1-1.8-2-.5V6.7l2-.5-1-1.8 1.8-1.8 1.8 1z" style="stroke-width:1.2"/><circle cx="8" cy="8" r="2.2" class="ic" style="stroke-width:1.2"/></svg>
<svg style="left:1269px;top:742px" width="16" height="16"><circle cx="8" cy="8" r="6.8" class="ic" style="stroke-width:1.3"/><path class="ic" d="M8 4.5V8l2.5 2" style="stroke-width:1.3"/></svg>
<div class="a" style="left:1297px;top:736px;width:44px;height:28px;border:1px solid #43454a;border-radius:4px"></div>
<svg style="left:1311px;top:743px" width="16" height="14"><path d="M1.5 1.5L14.5 7 1.5 12.5 3.5 7zM3.5 7h5" fill="none" stroke="#6f737a" stroke-width="1.2" stroke-linejoin="round"/></svg>
<div class="t" style="left:1003px;top:777px;font-size:11.7px;color:#6f737a">Gemini can make mistakes, so double-check it</div>
<!-- RIGHT STRIP -->
<div class="a" style="left:1359px;top:38px;width:39px;height:760px;background:#282b2d;border-left:1px solid #1e1f22"></div>
<svg style="left:1370px;top:50px" width="18" height="18"><path class="ic" d="M3 13.5V8a6 6 0 0 1 12 0v5.5l1.5 1.5h-15zM7 17h4" style="stroke-width:1.3"/></svg>
<div class="a" style="left:1383px;top:48px;width:8px;height:8px;border-radius:50%;background:#4a8af4;box-shadow:0 0 0 1.5px #282b2d"></div>
<svg style="left:1370px;top:90px" width="18" height="18"><path class="ic" d="M1.5 15c0-5.5 3-9 7.5-9h3c.8-2 2.5-3 4-2.2 1.3.7 1.2 2.7.3 4l-1.3 1.5V15h-2.2l-.8-2.5H7.5L6.7 15H4.5L4 13M9 6.5c0 2 1 3.5 3 3.5" style="stroke-width:1.3"/><circle cx="13.3" cy="6.8" r=".8" fill="#ced0d6"/></svg>
<svg style="left:1370px;top:130px" width="18" height="18"><path class="ic" d="M8.5 9V2.5a1 1 0 0 0-1-1h-5a1 1 0 0 0-1 1v13a1 1 0 0 0 1 1h4M8.5 16.5a4 4 0 0 1 8 0zM10 11l-1-1.5M15 11l1-1.5" style="stroke-width:1.3"/></svg>
<div class="a" style="left:1368px;top:164px;width:23px;height:1px;background:#43454a"></div>
<svg style="left:1370px;top:181px" width="18" height="18"><path class="ic" d="M7 2.5H2.5a1 1 0 0 0-1 1v12a1 1 0 0 0 1 1H6M8 10h8M8 13.5h8M8 16.5h8M9 6.5h6v3.5H9z" style="stroke-width:1.3"/></svg>
<div class="a" style="left:1383px;top:179px;width:8px;height:8px;border-radius:50%;background:#5fb865;box-shadow:0 0 0 1.5px #282b2d"></div>
<div class="a" style="left:1365px;top:215px;width:30px;height:30px;border-radius:6px;background:#43454a"></div>
<svg style="left:1371px;top:221px" width="18" height="18"><path d="M9 18A10.7 10.7 0 0 0 0 9 10.7 10.7 0 0 0 9 0a10.7 10.7 0 0 0 9 9 10.7 10.7 0 0 0-9 9z" fill="#dfe1e5"/></svg>
<!-- STATUS BAR -->
<div class="a" style="left:0;top:798px;width:1398px;height:30px;background:#282b2d;border-top:1px solid #1e1f22"></div>
<svg style="left:14px;top:806px" width="14" height="14"><path d="M1 1h11L6.5 7 12 13H1z" fill="none" stroke="#b188e8" stroke-width="1.4" stroke-linejoin="round"/></svg>
<div class="t" style="left:34px;top:806px;font-size:14.1px;color:#c3c5ca">compose-compose-model-1758866285245.xml</div>
<div class="t" style="left:1091px;top:806px;font-size:13.5px;color:#c3c5ca">1:1</div>
<div class="t" style="left:1123px;top:806px;font-size:13.5px;color:#c3c5ca">LF</div>
<div class="t" style="left:1154px;top:806px;font-size:13.5px;color:#c3c5ca">UTF-8</div>
<svg style="left:1211px;top:806px" width="15" height="15"><path d="M7.5 15A9 9 0 0 0 0 7.5 9 9 0 0 0 7.5 0a9 9 0 0 0 7.5 7.5 9 9 0 0 0-7.5 7.5z" fill="#dfe1e5"/></svg>
<svg style="left:1244px;top:805px" width="16" height="16"><path class="ic" d="M6 14.5H2.5a1 1 0 0 1-1-1v-11a1 1 0 0 1 1-1h5l3.5 3.5v3" style="stroke-width:1.2"/><circle cx="11.5" cy="12" r="2.5" class="ic" style="stroke-width:1.2"/></svg>
<div class="t" style="left:1262px;top:806px;font-size:13.5px;color:#c3c5ca">4 spaces</div>
<svg style="left:1336px;top:806px" width="16" height="15"><rect x="1" y="7" width="9" height="6.5" rx="1" class="ic" style="stroke-width:1.2"/><path class="ic" d="M8 7V4.5a2.5 2.5 0 0 1 5 0V6" style="stroke-width:1.2"/><path d="M5.5 9.5v2" stroke="#ced0d6" stroke-width="1.4"/></svg>
<svg style="left:1366px;top:805px" width="17" height="17"><circle cx="8.5" cy="8.5" r="7" class="ic" style="stroke-width:1.3"/><path d="M8.5 4.5v5" stroke="#ced0d6" stroke-width="1.8"/><circle cx="8.5" cy="12" r="1" fill="#ced0d6"/></svg>
<!-- CONTEXT MENU -->
<div class="a" style="left:734px;top:281px;width:211px;height:255px;border-radius:8px;background:#282b2d;border:1px solid #43454a;box-shadow:0 4px 14px rgba(0,0,0,.45)"></div>
<div class="mi" style="top:294px">Copy Image</div>
<div class="mi" style="top:320px">Zoom to Selection</div>
<div class="mi" style="top:346px">Jump to Definition</div>
<div class="mi" style="top:372px">View in Focus Mode</div>
<div class="a" style="left:745px;top:395px;width:189px;height:1px;background:#43454a"></div>
<svg style="left:749px;top:405px" width="17" height="16"><path d="M2 11V2h13l-1.2 4.5" fill="none" stroke="#ced0d6" stroke-width="1.2" stroke-linejoin="round"/><path d="M2 11h1.5" stroke="#ced0d6" stroke-width="1.2"/><path d="M6.5 10l2.8 3L15.5 6" fill="none" stroke="#5fb865" stroke-width="1.4"/></svg>
<div class="mi" style="top:407px">Start UI Check Mode</div>
<svg style="left:749px;top:431px" width="17" height="17"><circle cx="6.8" cy="10.2" r="5.3" class="ic" style="stroke-width:1.2"/><circle cx="8.5" cy="8.5" r="5.3" class="ic" style="stroke-width:1.2"/><circle cx="10.2" cy="6.8" r="5.3" class="ic" style="stroke-width:1.2"/></svg>
<div class="mi" style="top:433px">Start Animation Preview</div>
<svg style="left:749px;top:456px" width="16" height="17"><path class="ic" d="M6 9V4.5a1.2 1.2 0 0 1 2.4 0V9M8.4 8V7a1.2 1.2 0 0 1 2.4 0v1.5M10.8 8.5a1.2 1.2 0 0 1 2.4 0V11c0 3-2 5-4.5 5-2 0-3-1-4-2.5L2.5 11a1.1 1.1 0 0 1 1.7-1.4L6 11.5M3.5 5a3.5 3.5 0 0 1 7-1" style="stroke-width:1.2"/></svg>
<div class="mi" style="top:459px">Start Interactive Mode</div>
<svg style="left:750px;top:483px" width="16" height="16"><path class="ic" d="M6 14.5H2.5a1 1 0 0 1-1-1v-11a1 1 0 0 1 1-1h5a1 1 0 0 1 1 1V7" style="stroke-width:1.2"/><path d="M9 9v6.5l5.5-3.25z" fill="none" stroke="#5fb865" stroke-width="1.2" stroke-linejoin="round"/></svg>
<div class="mi" style="top:485px">Run Preview</div>
<div class="a" style="left:742px;top:505px;width:195px;height:24px;border-radius:4px;background:#2e436e"></div>
<svg style="left:749px;top:509px" width="16" height="16"><path d="M8 16A9.5 9.5 0 0 0 0 8 9.5 9.5 0 0 0 8 0a9.5 9.5 0 0 0 8 8 9.5 9.5 0 0 0-8 8z" fill="#4a8af4"/></svg>
<div class="mi" style="top:511px">AI Actions</div>
<svg style="left:919px;top:513px" width="7" height="10"><path d="M1.5 1l4 4-4 4" fill="none" stroke="#a8abb1" stroke-width="1.2"/></svg>
<!-- cursor -->
<svg style="left:844px;top:517px" width="14" height="20"><path d="M1 1v15l3.8-3.5 2.5 6 2.4-1-2.5-5.8h5.2z" fill="#1a1a1a" stroke="#fff" stroke-width="1.1" stroke-linejoin="round"/></svg>
<!-- SUBMENU -->
<div class="a" style="left:945px;top:498px;width:200px;height:90px;border-radius:8px;background:#282b2d;border:1px solid #43454a;box-shadow:0 4px 14px rgba(0,0,0,.45)"></div>
<div class="smi" style="top:511px">Transform UI with Gemini</div>
<div class="smi" style="top:537px">Match UI to Target Image</div>
<div class="smi" style="top:563px">Fix UI Check Issues</div>
<div class="a" style="left:0;top:0;width:1398px;height:828px;border-radius:4px 4px 10px 10px;box-shadow:inset 0 0 0 1px #45474b;pointer-events:none"></div>
</div>
</body></html>
